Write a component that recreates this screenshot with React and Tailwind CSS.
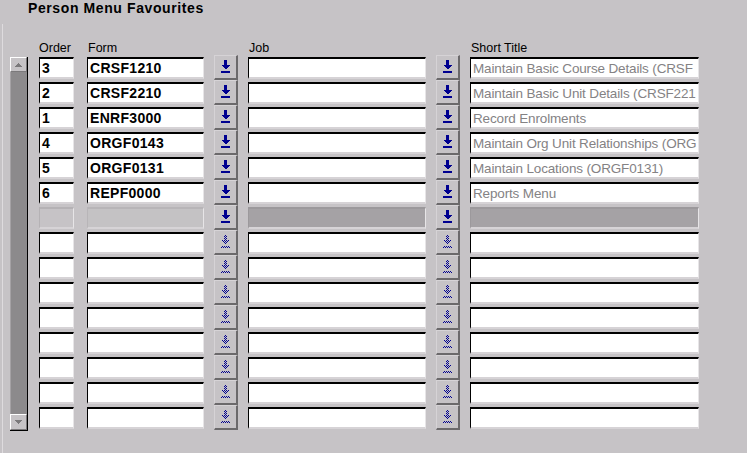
import React from "react";

// short titles are cut where the field ends, as in the form
const rows = [
  { order: "3", form: "CRSF1210", title: "Maintain Basic Course Details (CRSF" },
  { order: "2", form: "CRSF2210", title: "Maintain Basic Unit Details (CRSF221" },
  { order: "1", form: "ENRF3000", title: "Record Enrolments" },
  { order: "4", form: "ORGF0143", title: "Maintain Org Unit Relationships (ORG" },
  { order: "5", form: "ORGF0131", title: "Maintain Locations (ORGF0131)" },
  { order: "6", form: "REPF0000", title: "Reports Menu" },
];

const EMPTY_ROWS = 8;

// down arrow with a bar underneath, as on the LOV buttons
const LovArrow = ({ disabled }) => (
  <svg width="9" height="13" viewBox="0 0 9 13" shapeRendering="crispEdges">
    <path
      d="M3 0H6V5H9L4.5 9.5L0 5H3Z"
      fill={disabled ? "url(#dither)" : "#000090"}
    />
    <rect x="0" y="11" width="9" height="1.5" fill={disabled ? "url(#dither)" : "#000090"} />
  </svg>
);

const LovButton = ({ disabled }) => (
  <div className="w-[24px] h-[25px] flex items-center justify-center border-t border-l border-[#d6d3d6] border-r-2 border-b-2 border-r-[#6b696b] border-b-[#6b696b] bg-[#c6c3c6] pb-[1px]">
    <LovArrow disabled={disabled} />
  </div>
);

const Field = ({ width, children, tone = "white", bold }) => {
  const bg =
    tone === "white"
      ? "bg-white border-t-black border-l-black"
      : tone === "bg"
      ? "bg-[#c6c3c6] border-t-[#b5b2b5] border-l-[#b5b2b5]"
      : tone === "light"
      ? "bg-[#c4c2c4] border-t-[#b8b5b8] border-l-[#b8b5b8]"
      : "bg-[#a5a2a5] border-t-[#9c999c] border-l-[#9c999c]";
  return (
    <div
      className={`${width} h-[22px] mt-[2px] border-t-2 border-l border-r border-b-2 border-r-[#e7e5e7] border-b-[#d6d3d6] ${bg} overflow-hidden whitespace-nowrap pl-[2px] leading-[19px] ${
        bold
          ? "text-[14px] font-bold text-black tracking-[0.3px]"
          : "text-[13.5px] text-[#848284] tracking-[-0.15px]"
      }`}
    >
      {children}
    </div>
  );
};

const Row = ({ order, form, title, kind }) => {
  const filled = kind === "filled";
  const current = kind === "current";
  return (
    <div className="flex h-[25px] items-start">
      <div className="ml-[11px]">
        <Field width="w-[35px]" tone={current ? "bg" : "white"} bold>
          {order}
        </Field>
      </div>
      <div className="ml-[13px]">
        <Field width="w-[117px]" tone={current ? "light" : "white"} bold>
          {form}
        </Field>
      </div>
      <div className="ml-[10px]">
        <LovButton disabled={!filled && !current} />
      </div>
      <div className="ml-[10px]">
        <Field width="w-[178px]" tone={current ? "dark" : "white"} />
      </div>
      <div className="ml-[10px]">
        <LovButton disabled={!filled && !current} />
      </div>
      <div className="ml-[10px]">
        <Field width="w-[229px]" tone={current ? "dark" : "white"}>
          {title}
        </Field>
      </div>
    </div>
  );
};

const ScrollBar = () => (
  <div className="w-[18px] h-[374px] mt-[2px] flex flex-col border-r border-b border-black bg-[#8c8a8c]">
    <div className="h-[15px] bg-[#c6c3c6] border-t border-l border-white border-r border-b border-r-[#7b797b] border-b-[#7b797b] flex items-center justify-center">
      <svg width="7" height="4" viewBox="0 0 7 4" shapeRendering="crispEdges">
        <path d="M3.5 0L7 4H0Z" fill="#7b797b" />
      </svg>
    </div>
    <div className="flex-1 border-l border-[#a5a2a5]" />
    <div className="h-[16px] bg-[#c6c3c6] border-t border-l border-white border-r border-b border-r-[#7b797b] border-b-[#7b797b] flex items-center justify-center">
      <svg width="7" height="4" viewBox="0 0 7 4" shapeRendering="crispEdges">
        <path d="M0 0H7L3.5 4Z" fill="#7b797b" />
      </svg>
    </div>
  </div>
);

export default function App() {
  return (
    <div
      className="w-[747px] h-[453px] overflow-hidden bg-[#c6c3c6] text-black"
      style={{ fontFamily: '"Liberation Sans", Arial, sans-serif' }}
    >
      <svg width="0" height="0" className="absolute">
        <defs>
          <pattern id="dither" width="2" height="2" patternUnits="userSpaceOnUse">
            <rect x="0" y="0" width="1" height="1" fill="#000090" />
            <rect x="1" y="1" width="1" height="1" fill="#000090" />
          </pattern>
        </defs>
      </svg>

      <div className="pl-[28px] h-[16px] leading-[16px] text-[14px] font-bold tracking-[0.6px]">
        Person Menu Favourites
      </div>

      <div className="ml-[2px] mt-[8px] border-l border-[#dedbde] h-[429px]">
        <div className="flex h-[31px] pt-[17px] text-[12.5px] leading-[14px]">
          <span className="ml-[36px] w-[49px]">Order</span>
          <span className="w-[161px]">Form</span>
          <span className="w-[222px]">Job</span>
          <span>Short Title</span>
        </div>

        <div className="flex">
          <div className="ml-[7px]">
            <ScrollBar />
          </div>
          <div className="flex flex-col">
            {rows.map((r) => (
              <Row key={r.order} {...r} kind="filled" />
            ))}
            <Row kind="current" />
            {Array.from({ length: EMPTY_ROWS }).map((_, i) => (
              <Row key={`e${i}`} kind="empty" />
            ))}
          </div>
        </div>
      </div>
    </div>
  );
}
